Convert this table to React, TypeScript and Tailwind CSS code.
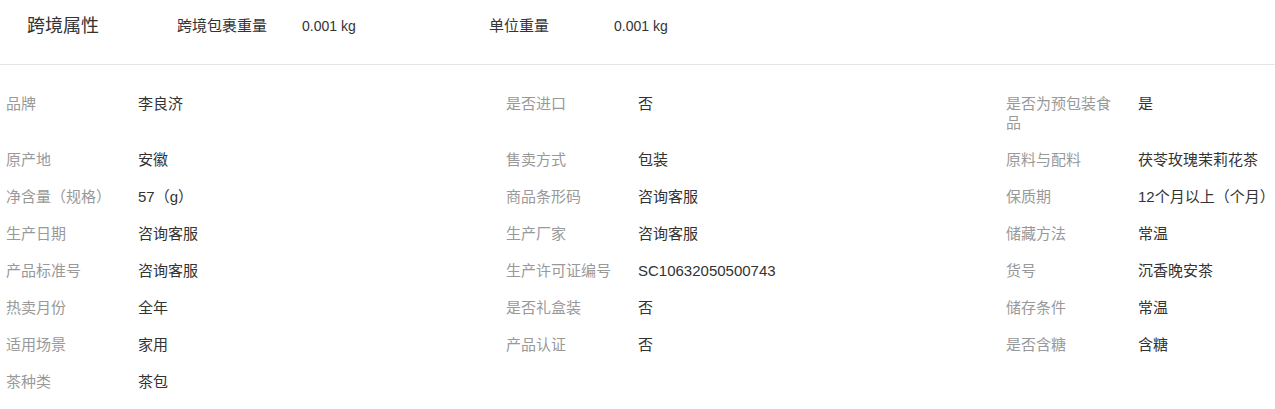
import * as React from "react";

// ─── Data ─────────────────────────────────────────────────────────────────────

const HEADER_ITEMS = [
  { label: "跨境包裹重量", value: "0.001 kg" },
  { label: "单位重量", value: "0.001 kg" },
];

const ROWS: Array<Array<[string, string]>> = [
  [["品牌", "李良济"], ["是否进口", "否"], ["是否为预包装食品", "是"]],
  [["原产地", "安徽"], ["售卖方式", "包装"], ["原料与配料", "茯苓玫瑰茉莉花茶"]],
  [["净含量（规格）", "57（g）"], ["商品条形码", "咨询客服"], ["保质期", "12个月以上（个月）"]],
  [["生产日期", "咨询客服"], ["生产厂家", "咨询客服"], ["储藏方法", "常温"]],
  [["产品标准号", "咨询客服"], ["生产许可证编号", "SC10632050500743"], ["货号", "沉香晚安茶"]],
  [["热卖月份", "全年"], ["是否礼盒装", "否"], ["储存条件", "常温"]],
  [["适用场景", "家用"], ["产品认证", "否"], ["是否含糖", "含糖"]],
  [["茶种类", "茶包"]],
];

const FONT = "font-['Liberation_Sans','Noto_Sans_CJK_SC',sans-serif]";

// ─── Cell ─────────────────────────────────────────────────────────────────────

function AttrCell({ label, value }: { label: string; value: string }) {
  return (
    <div className="flex py-[9px] text-[15px] leading-[19px]">
      <div className="w-[112px] shrink-0 text-[#999]">{label}</div>
      <div className="ml-[20px] whitespace-nowrap text-[#333]">{value}</div>
    </div>
  );
}

// ─── App ──────────────────────────────────────────────────────────────────────

export default function App() {
  return (
    <div className={`h-[409px] w-[1275px] bg-white ${FONT}`}>
      {/* cross-border header */}
      <div className="h-[65px] border-b border-[#e5e5e5]">
        <div className="flex h-[53px] items-center pl-[27px] text-[#333]">
          <div className="w-[150px] shrink-0 text-[18px]">跨境属性</div>
          {HEADER_ITEMS.map((item) => (
            <React.Fragment key={item.label}>
              <div className="w-[125px] shrink-0 text-[15px]">{item.label}</div>
              <div className="w-[187px] shrink-0 text-[14px]">{item.value}</div>
            </React.Fragment>
          ))}
        </div>
      </div>

      {/* attribute grid */}
      <div className="grid grid-cols-[500px_500px_1fr] px-[6px] pt-[20px]">
        {ROWS.map((row, i) =>
          [0, 1, 2].map((c) =>
            row[c] ? (
              <AttrCell key={`${i}-${c}`} label={row[c][0]} value={row[c][1]} />
            ) : (
              <div key={`${i}-${c}`} />
            )
          )
        )}
      </div>
    </div>
  );
}
